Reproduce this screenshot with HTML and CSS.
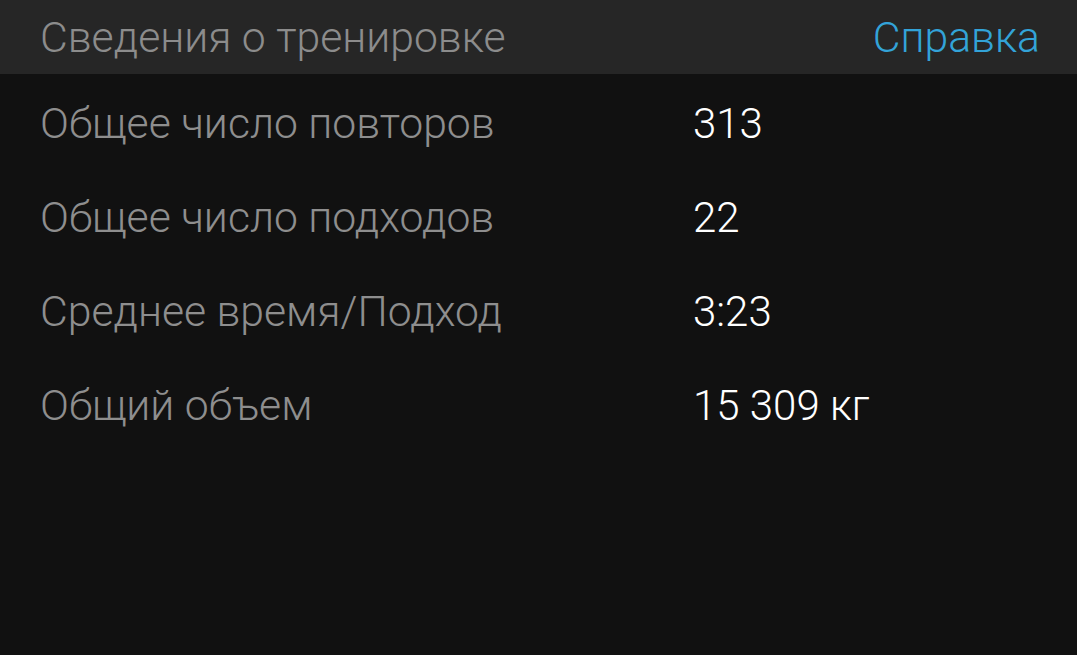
FILE: index.html
```html
<!DOCTYPE html>
<html lang="ru">
<head>
<meta charset="utf-8">
<title>Сведения о тренировке</title>
<link rel="stylesheet" href="styles.css">
</head>
<body>
<header class="bar">
  <h1 class="bar-title">Сведения о тренировке</h1>
  <a class="bar-link" href="#">Справка</a>
</header>
<main class="stats">
  <div class="row"><span class="label">Общее число повторов</span><span class="value">313</span></div>
  <div class="row"><span class="label">Общее число подходов</span><span class="value">22</span></div>
  <div class="row"><span class="label">Среднее время/Подход</span><span class="value">3:23</span></div>
  <div class="row"><span class="label">Общий объем</span><span class="value">15 309 кг</span></div>
</main>
</body>
</html>
```

FILE: styles.css
```css
html, body {
  margin: 0;
  padding: 0;
  height: 100%;
}

body {
  background: #111111;
  font-family: Roboto, "Noto Sans", sans-serif;
  font-weight: 300;
  font-size: 42.7px;
}

.bar {
  display: flex;
  align-items: center;
  justify-content: space-between;
  height: 74px;
  padding: 0 37px 0 40px;
  background: #262626;
}

.bar-title {
  margin: 0;
  font-size: 42.7px;
  font-weight: 300;
  color: #8c8c8c;
}

.bar-link {
  color: #33a3d8;
  text-decoration: none;
}

.stats {
  display: flex;
  flex-direction: column;
  padding: 2px 0 0 40px;
}

.row {
  display: grid;
  grid-template-columns: 653px 1fr;
  align-items: center;
  height: 94px;
}

.label {
  color: #8e8e8e;
}

.value {
  color: #ffffff;
  font-size: 42px;
}
```
